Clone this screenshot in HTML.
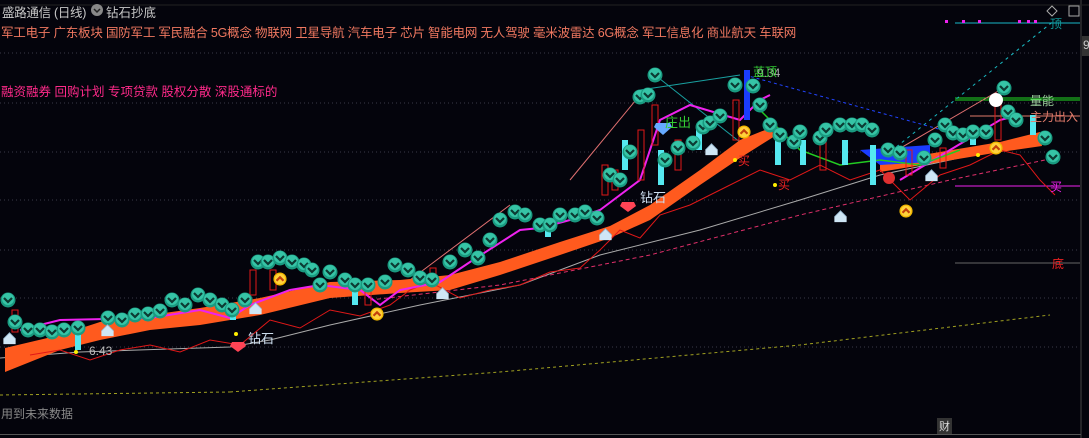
<!DOCTYPE html>
<html><head><meta charset="utf-8"><style>
html,body{margin:0;padding:0;background:#04040c;width:1089px;height:438px;overflow:hidden;font-family:"Liberation Sans","Noto Sans CJK SC",sans-serif}
.t{position:absolute;white-space:nowrap}
</style></head><body>
<svg width="1089" height="438" style="position:absolute;left:0;top:0">
<defs>
<symbol id="c" viewBox="0 0 16 16"><circle cx="8" cy="8" r="7.5" fill="#1a9a80"/><circle cx="8" cy="7" r="6" fill="#36c4a6"/><path d="M4 6 L8 10 L12 6" stroke="#0c3b33" stroke-width="2.2" fill="none"/></symbol>
<symbol id="h" viewBox="0 0 16 16"><path d="M1 9 L8 2 L15 9 L15 15 L1 15Z" fill="#cfe6f5"/><path d="M1 9 L8 2 L15 9" stroke="#8fb0c8" fill="none"/></symbol>
<symbol id="u" viewBox="0 0 16 16"><circle cx="8" cy="8" r="7.5" fill="#f2b800"/><circle cx="8" cy="8" r="6" fill="#ffd13b"/><path d="M4 10 L8 6 L12 10" stroke="#c2410c" stroke-width="2.5" fill="none"/></symbol>
</defs>
<g stroke="#3a3a48" stroke-dasharray="1,3">
<line x1="0" y1="53" x2="1080" y2="53"/><line x1="0" y1="103" x2="1080" y2="103"/><line x1="0" y1="152" x2="1080" y2="152"/><line x1="0" y1="200" x2="1080" y2="200"/><line x1="0" y1="250" x2="1080" y2="250"/><line x1="0" y1="298" x2="1080" y2="298"/><line x1="0" y1="347" x2="1080" y2="347"/>
</g>
<line x1="1081" y1="0" x2="1081" y2="438" stroke="#444"/>
<rect x="1082" y="36" width="7" height="20" fill="#333"/>
<line x1="0" y1="434.5" x2="1081" y2="434.5" stroke="#555"/>
<line x1="0" y1="5" x2="1089" y2="5" stroke="#222"/>
<line x1="955" y1="23" x2="1080" y2="23" stroke="#17b9c9"/>
<line x1="955" y1="98" x2="1080" y2="98" stroke="#22dd22"/><line x1="955" y1="100" x2="1080" y2="100" stroke="#22dd22"/>
<line x1="970" y1="116" x2="1080" y2="116" stroke="#e07a6a"/>
<line x1="955" y1="186" x2="1080" y2="186" stroke="#ee22ee"/>
<line x1="955" y1="263" x2="1080" y2="263" stroke="#666"/>
<g fill="#ee22ee"><rect x="945" y="20" width="3" height="3"/><rect x="962" y="20" width="3" height="3"/><rect x="978" y="20" width="3" height="3"/><rect x="1018" y="20" width="3" height="3"/><rect x="1027" y="20" width="3" height="3"/><rect x="1034" y="20" width="3" height="3"/></g>
<polyline points="230,392 500,372 800,345 1050,315" stroke="#a0a020" stroke-dasharray="3,3" fill="none"/>
<polyline points="0,395 230,392" stroke="#a0a020" stroke-dasharray="3,3" fill="none"/>
<polyline points="0,358 80,352 230,347 270,340 330,325 420,305 520,285 600,255 700,230 800,200 880,175 950,160 1040,140" stroke="#aaa" fill="none"/>
<polyline points="370,300 500,285 650,255 800,215 950,180 1045,160" stroke="#e0306a" stroke-dasharray="4,3" fill="none"/>
<polyline points="880,160 1055,20" stroke="#19b8c0" stroke-dasharray="3,4" fill="none"/>
<polyline points="745,75 960,135" stroke="#2244ff" stroke-dasharray="3,3" fill="none"/>
<polyline points="640,90 740,75" stroke="#19a0a0" fill="none"/>
<polyline points="655,75 750,150" stroke="#19a0a0" fill="none"/>
<polyline points="570,180 640,95" stroke="#e07070" fill="none"/>
<polyline points="410,280 510,205" stroke="#e07070" fill="none"/>
<polyline points="880,160 1000,90" stroke="#e07070" fill="none"/>
<path d="M5,348 L60,335 L100,322 L150,315 L200,308 L260,298 L330,282 L400,280 L450,275 L500,262 L560,242 L610,226 L650,205 L700,170 L740,140 L770,128 L775,136 L740,158 L700,185 L650,220 L610,238 L560,255 L500,275 L450,290 L400,293 L330,298 L260,315 L200,325 L150,330 L100,340 L60,350 L5,372 Z" fill="#ff5a1e"/>
<path d="M880,162 L940,152 L1000,142 L1040,132 L1042,146 L1000,152 L940,162 L880,172 Z" fill="#ff5a1e"/>
<path d="M860,150 L930,145 L930,162 L880,165 Z" fill="#1a3cff"/>
<polyline points="30,355 60,350 90,360 120,350 150,345 180,352 210,340 240,345 270,320 300,328 330,310 360,316 390,305 410,290 430,282 460,298 490,290 520,285 550,272 580,268 600,250 620,230 640,238 660,215 690,205 720,190 760,170 790,180 820,165 850,180 880,170 910,200 940,175 970,165 1000,150 1020,155 1040,180 1055,195" stroke="#e01818" fill="none"/>
<polyline points="20,330 60,320 150,318 200,310 230,318 250,305 290,290 320,285 360,290 380,305 400,290 440,282 470,262 520,230 540,228 570,220 600,210 640,180 660,120 690,105 740,120 760,100 770,95" stroke="#ee22ee" stroke-width="2" fill="none"/>
<polyline points="900,180 950,150 1000,120 1020,115" stroke="#ee22ee" stroke-width="2" fill="none"/>
<polyline points="760,110 800,150 840,165 880,160 920,165 960,150" stroke="#22cc22" stroke-width="1.5" fill="none"/>
<g stroke="#e01818" fill="none">
<rect x="12" y="310" width="6" height="22"/><rect x="250" y="270" width="6" height="25"/><rect x="270" y="270" width="6" height="20"/><rect x="365" y="285" width="6" height="20"/><rect x="430" y="268" width="6" height="18"/><rect x="602" y="165" width="6" height="30"/><rect x="612" y="170" width="6" height="20"/><rect x="638" y="130" width="6" height="50"/><rect x="652" y="105" width="6" height="40"/><rect x="675" y="140" width="6" height="30"/><rect x="733" y="100" width="6" height="40"/><rect x="820" y="140" width="6" height="30"/><rect x="906" y="150" width="6" height="25"/><rect x="940" y="148" width="6" height="20"/><rect x="995" y="105" width="6" height="35"/>
</g>
<g fill="#55e8f0">
<rect x="75" y="330" width="6" height="20"/><rect x="230" y="305" width="6" height="15"/><rect x="352" y="290" width="6" height="15"/><rect x="545" y="225" width="6" height="12"/><rect x="622" y="140" width="6" height="30"/><rect x="658" y="150" width="6" height="35"/><rect x="696" y="125" width="6" height="25"/><rect x="775" y="140" width="6" height="25"/><rect x="800" y="140" width="6" height="25"/><rect x="842" y="140" width="6" height="25"/><rect x="870" y="145" width="6" height="40"/><rect x="970" y="130" width="6" height="15"/><rect x="1030" y="115" width="6" height="20"/>
</g>
<rect x="744" y="70" width="6" height="50" fill="#1a3cff"/>
<g>
<use href="#c" x="0" y="292" width="16" height="16"/><use href="#c" x="7" y="314" width="16" height="16"/><use href="#c" x="20" y="322" width="16" height="16"/><use href="#c" x="32" y="322" width="16" height="16"/><use href="#c" x="44" y="324" width="16" height="16"/><use href="#c" x="56" y="322" width="16" height="16"/><use href="#c" x="70" y="320" width="16" height="16"/><use href="#c" x="100" y="310" width="16" height="16"/><use href="#c" x="114" y="312" width="16" height="16"/><use href="#c" x="127" y="307" width="16" height="16"/><use href="#c" x="140" y="306" width="16" height="16"/><use href="#c" x="152" y="303" width="16" height="16"/><use href="#c" x="164" y="292" width="16" height="16"/><use href="#c" x="177" y="297" width="16" height="16"/><use href="#c" x="190" y="287" width="16" height="16"/><use href="#c" x="202" y="292" width="16" height="16"/><use href="#c" x="214" y="297" width="16" height="16"/><use href="#c" x="224" y="302" width="16" height="16"/><use href="#c" x="237" y="292" width="16" height="16"/><use href="#c" x="250" y="254" width="16" height="16"/><use href="#c" x="260" y="254" width="16" height="16"/><use href="#c" x="272" y="250" width="16" height="16"/><use href="#c" x="284" y="254" width="16" height="16"/><use href="#c" x="296" y="257" width="16" height="16"/><use href="#c" x="304" y="262" width="16" height="16"/><use href="#c" x="312" y="277" width="16" height="16"/><use href="#c" x="322" y="264" width="16" height="16"/><use href="#c" x="337" y="272" width="16" height="16"/><use href="#c" x="347" y="277" width="16" height="16"/><use href="#c" x="360" y="277" width="16" height="16"/><use href="#c" x="377" y="274" width="16" height="16"/><use href="#c" x="387" y="257" width="16" height="16"/><use href="#c" x="400" y="262" width="16" height="16"/><use href="#c" x="412" y="270" width="16" height="16"/><use href="#c" x="424" y="272" width="16" height="16"/><use href="#c" x="442" y="254" width="16" height="16"/><use href="#c" x="457" y="242" width="16" height="16"/><use href="#c" x="470" y="250" width="16" height="16"/><use href="#c" x="482" y="232" width="16" height="16"/><use href="#c" x="492" y="212" width="16" height="16"/><use href="#c" x="507" y="204" width="16" height="16"/><use href="#c" x="517" y="207" width="16" height="16"/><use href="#c" x="532" y="217" width="16" height="16"/><use href="#c" x="542" y="217" width="16" height="16"/><use href="#c" x="552" y="207" width="16" height="16"/><use href="#c" x="567" y="207" width="16" height="16"/><use href="#c" x="577" y="204" width="16" height="16"/><use href="#c" x="589" y="210" width="16" height="16"/><use href="#c" x="602" y="167" width="16" height="16"/><use href="#c" x="612" y="172" width="16" height="16"/><use href="#c" x="622" y="144" width="16" height="16"/><use href="#c" x="632" y="89" width="16" height="16"/><use href="#c" x="640" y="87" width="16" height="16"/><use href="#c" x="647" y="67" width="16" height="16"/><use href="#c" x="657" y="152" width="16" height="16"/><use href="#c" x="670" y="140" width="16" height="16"/><use href="#c" x="695" y="119" width="16" height="16"/><use href="#c" x="685" y="135" width="16" height="16"/><use href="#c" x="702" y="115" width="16" height="16"/><use href="#c" x="712" y="108" width="16" height="16"/><use href="#c" x="727" y="77" width="16" height="16"/><use href="#c" x="745" y="78" width="16" height="16"/><use href="#c" x="752" y="97" width="16" height="16"/><use href="#c" x="762" y="117" width="16" height="16"/><use href="#c" x="772" y="127" width="16" height="16"/><use href="#c" x="786" y="134" width="16" height="16"/><use href="#c" x="792" y="124" width="16" height="16"/><use href="#c" x="812" y="130" width="16" height="16"/><use href="#c" x="818" y="122" width="16" height="16"/><use href="#c" x="832" y="117" width="16" height="16"/><use href="#c" x="844" y="117" width="16" height="16"/><use href="#c" x="854" y="117" width="16" height="16"/><use href="#c" x="864" y="122" width="16" height="16"/><use href="#c" x="880" y="142" width="16" height="16"/><use href="#c" x="892" y="145" width="16" height="16"/><use href="#c" x="916" y="150" width="16" height="16"/><use href="#c" x="927" y="132" width="16" height="16"/><use href="#c" x="937" y="117" width="16" height="16"/><use href="#c" x="945" y="125" width="16" height="16"/><use href="#c" x="955" y="127" width="16" height="16"/><use href="#c" x="965" y="124" width="16" height="16"/><use href="#c" x="978" y="124" width="16" height="16"/><use href="#c" x="996" y="80" width="16" height="16"/><use href="#c" x="1000" y="104" width="16" height="16"/><use href="#c" x="1008" y="112" width="16" height="16"/><use href="#c" x="1037" y="130" width="16" height="16"/><use href="#c" x="1045" y="149" width="16" height="16"/>
</g>
<use href="#h" x="2" y="331" width="15" height="14"/><use href="#h" x="100" y="323" width="15" height="14"/><use href="#h" x="248" y="301" width="15" height="14"/><use href="#h" x="435" y="286" width="15" height="14"/><use href="#h" x="598" y="227" width="15" height="14"/><use href="#h" x="704" y="142" width="15" height="14"/><use href="#h" x="833" y="209" width="15" height="14"/><use href="#h" x="924" y="168" width="15" height="14"/>
<use href="#u" x="273" y="272" width="14" height="14"/><use href="#u" x="370" y="307" width="14" height="14"/><use href="#u" x="737" y="125" width="14" height="14"/><use href="#u" x="899" y="204" width="14" height="14"/><use href="#u" x="989" y="141" width="14" height="14"/>
<circle cx="889" cy="178" r="6" fill="#e03030"/><circle cx="996" cy="100" r="7" fill="#fff"/>
<path d="M232,342 L244,342 L246,346 L238,352 L230,346Z" fill="#ff4455"/><path d="M622,202 L634,202 L636,206 L628,212 L620,206Z" fill="#ff4455"/>
<path d="M656,123 L670,123 L672,127 L663,135 L654,127Z" fill="#66aaff"/>
<g fill="#ffee00"><circle cx="76" cy="352" r="2"/><circle cx="236" cy="334" r="2"/><circle cx="735" cy="160" r="2"/><circle cx="775" cy="185" r="2"/><circle cx="978" cy="155" r="2"/></g>
<path d="M1052,6 L1057,11 L1052,16 L1047,11Z" stroke="#aaa" fill="none"/><rect x="1069" y="6" width="10" height="10" stroke="#aaa" fill="none"/>
<circle cx="97" cy="10" r="6" fill="#888"/><path d="M94,9 L97,12 L100,9" stroke="#222" fill="none" stroke-width="1.5"/>
</svg>
<div class="t" style="left:2px;top:2px;font-size:12.5px;color:#c8c8c8;letter-spacing:-0.3px">盛路通信 (日线)</div>
<div class="t" style="left:106px;top:2px;font-size:12.5px;color:#c8c8c8">钻石抄底</div>
<div class="t" style="left:1px;top:22px;font-size:12.5px;color:#f07860;letter-spacing:-0.2px">军工电子 广东板块 国防军工 军民融合 5G概念 物联网 卫星导航 汽车电子 芯片 智能电网 无人驾驶 毫米波雷达 6G概念 军工信息化 商业航天 车联网</div>
<div class="t" style="left:1px;top:81px;font-size:12.5px;color:#ff2a8a">融资融券 回购计划 专项贷款 股权分散 深股通标的</div>
<div class="t" style="left:89px;top:344px;font-size:12px;color:#bbb">6.43</div>
<div class="t" style="left:248px;top:328px;font-size:13px;color:#cde">钻石</div>
<div class="t" style="left:640px;top:187px;font-size:13px;color:#cde">钻石</div>
<div class="t" style="left:757px;top:66px;font-size:12px;color:#aaa">9.34</div>
<div class="t" style="left:753px;top:63px;font-size:12px;color:#3c3">蓝顶</div>
<div class="t" style="left:665px;top:112px;font-size:13px;color:#3c3">庄出</div>
<div class="t" style="left:738px;top:152px;font-size:12px;color:#e22">买</div>
<div class="t" style="left:778px;top:176px;font-size:12px;color:#e22">买</div>
<div class="t" style="left:1050px;top:178px;font-size:12px;color:#e2e">买</div>
<div class="t" style="left:1052px;top:255px;font-size:12px;color:#e22">底</div>
<div class="t" style="left:1050px;top:15px;font-size:12px;color:#199">顶</div>
<div class="t" style="left:1030px;top:92px;font-size:12px;color:#9c9">量能</div>
<div class="t" style="left:1030px;top:108px;font-size:12px;color:#e07a6a">主力出入</div>
<div class="t" style="left:1px;top:405px;font-size:12px;color:#888">用到未来数据</div>
<div class="t" style="left:937px;top:418px;font-size:11px;color:#ddd;background:#333;padding:0 2px">财</div>
<div class="t" style="left:1083px;top:38px;font-size:12px;color:#ccc">9</div>
</body></html>
